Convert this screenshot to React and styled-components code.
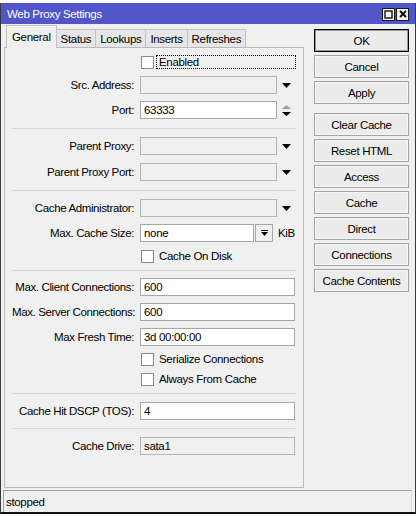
import React from "react";
import styled, { createGlobalStyle } from "styled-components";

const Global = createGlobalStyle`
  html, body { margin: 0; padding: 0; background: #ffffff; }
  body {
    font-family: "Liberation Sans", Arial, sans-serif;
    font-size: 11.5px;
    letter-spacing: -0.33px;
    color: #000;
  }
  #root { width: 416px; height: 516px; overflow: hidden; }
`;

const Page = styled.div`
  width: 416px;
  height: 516px;
  padding-top: 3px;
  box-sizing: border-box;
  background: #fff;
`;

const Window = styled.div`
  width: 416px;
  height: 511px;
  box-sizing: border-box;
  border-left: 1px solid #3a3a3a;
  border-right: 1px solid #3a3a3a;
  border-bottom: 2px solid #111;
  background: #f0f0f0;
  display: flex;
  flex-direction: column;
`;

const TitleBar = styled.div`
  height: 21px;
  flex: none;
  background: #5156c8;
  color: #fff;
  display: flex;
  align-items: center;
  padding: 0 6px 0 6px;
  font-size: 11.5px;
`;

const TitleButtons = styled.div`
  margin-left: auto;
  display: flex;
  gap: 1px;
  margin-top: 1px;
`;

const TitleButton = styled.div`
  width: 13px;
  height: 13px;
  box-sizing: border-box;
  border: 1px solid #1a1a1a;
  background: #f0f0f0;
  display: flex;
  align-items: center;
  justify-content: center;
`;

const Body = styled.div`
  flex: 1;
  display: flex;
  flex-direction: column;
  padding-top: 1px;
`;

const Main = styled.div`
  display: flex;
  align-items: flex-start;
  padding-left: 3px;
`;

const LeftCol = styled.div`
  width: 300px;
  display: flex;
  flex-direction: column;
`;

const TabStrip = styled.div`
  display: flex;
  align-items: flex-end;
  height: 23px;
  padding-left: 2px;
  margin-bottom: -1px;
  position: relative;
  z-index: 1;
`;

const Tab = styled.div`
  height: ${(p) => (p.$active ? "23px" : "19px")};
  box-sizing: border-box;
  padding: 0 ${(p) => (p.$active ? "5px" : "4px")};
  border: 1px solid #c2c2c2;
  border-bottom: ${(p) => (p.$active ? "none" : "1px solid #b9b9b9")};
  background: ${(p) => (p.$active ? "#f0f0f0" : "#e6e6e6")};
  display: flex;
  align-items: center;
  padding-top: ${(p) => (p.$active ? "0" : "1px")};
  & + & { margin-left: -1px; }
`;

const Panel = styled.div`
  height: 441px;
  box-sizing: border-box;
  border: 1px solid #b9b9b9;
  background: #f0f0f0;
  padding: 7px 7px 0 7px;
  display: flex;
  flex-direction: column;
`;

const Section = styled.div`
  display: flex;
  flex-direction: column;
  gap: ${(p) => p.$gap}px;
  margin-top: ${(p) => p.$mt || 0}px;
`;

const Separator = styled.div`
  border-top: 1px solid #d6d6d6;
  margin: ${(p) => p.$top}px 0 ${(p) => p.$bottom}px 0;
`;

const Row = styled.div`
  display: flex;
  align-items: center;
  height: 18px;
`;

const Label = styled.div`
  width: 122px;
  flex: none;
  text-align: right;
  margin-right: 6px;
  white-space: nowrap;
  letter-spacing: -0.38px;
`;

const Field = styled.div`
  width: ${(p) => p.$w}px;
  height: 18px;
  flex: none;
  box-sizing: border-box;
  border: 1px solid ${(p) => (p.$disabled ? "#b4b4b4" : "#a7a7a7")};
  background: ${(p) => (p.$disabled ? "#f0f0f0" : "#ffffff")};
  padding: 0 3px;
  display: flex;
  align-items: center;
  white-space: nowrap;
`;

const ArrowSlot = styled.div`
  width: 18px;
  height: 18px;
  flex: none;
  display: flex;
  align-items: center;
  justify-content: center;
`;

const SmallButton = styled.div`
  width: 18px;
  height: 18px;
  margin-left: 1px;
  flex: none;
  box-sizing: border-box;
  border: 1px solid #a7a7a7;
  background: #f0f0f0;
  display: flex;
  align-items: center;
  justify-content: center;
`;

const Unit = styled.span`
  margin-left: 5px;
`;

const CheckRow = styled.div`
  display: flex;
  align-items: center;
  height: 14px;
  padding-left: 129px;
`;

const CheckBox = styled.div`
  width: 13px;
  height: 13px;
  flex: none;
  box-sizing: border-box;
  border: 1px solid #8a8a8a;
  background: #fff;
`;

const CheckText = styled.div`
  flex: 1;
  height: 14px;
  box-sizing: border-box;
  margin-left: 2px;
  padding-left: 2px;
  border: 1px ${(p) => (p.$focused ? "dotted #000" : "solid transparent")};
  display: flex;
  align-items: center;
  white-space: nowrap;
`;

const RightCol = styled.div`
  margin-left: 10px;
  padding-top: 4px;
  display: flex;
  flex-direction: column;
  gap: 3px;
`;

const Button = styled.div`
  width: 95px;
  height: 23px;
  box-sizing: border-box;
  border: 1px solid ${(p) => (p.$default ? "#000" : "#a3a3a3")};
  box-shadow: inset 0 0 0 1px ${(p) => (p.$default ? "#9a9a9a" : "#f6f6f6")};
  background: #ececec;
  display: flex;
  align-items: center;
  justify-content: center;
  margin-top: ${(p) => p.$mt || 0}px;
  white-space: nowrap;
`;

const StatusBar = styled.div`
  height: 22px;
  margin: 2px 3px 0 2px;
  box-sizing: border-box;
  border-top: 1px solid #a0a0a0;
  border-left: 1px solid #a0a0a0;
  border-right: 1px solid #dadada;
  padding-left: 2px;
  display: flex;
  align-items: center;
`;

const DropArrow = () => (
  <svg width="9" height="5" viewBox="0 0 9 5">
    <polygon points="0,0 9,0 4.5,5" fill="#000" />
  </svg>
);

const SpinArrows = () => (
  <svg width="9" height="11" viewBox="0 0 9 11">
    <polygon points="0,4 9,4 4.5,0" fill="#a0a0a0" />
    <polygon points="0,7 9,7 4.5,11" fill="#000" />
  </svg>
);

const BarArrow = () => (
  <svg width="7" height="7" viewBox="0 0 7 7">
    <rect x="0" y="0" width="7" height="1" fill="#000" />
    <polygon points="0,2 7,2 3.5,6" fill="#000" />
  </svg>
);

const MaxIcon = () => (
  <svg width="9" height="9" viewBox="0 0 9 9">
    <rect x="1" y="1" width="7" height="7" fill="none" stroke="#000" strokeWidth="1.3" />
  </svg>
);

const CloseIcon = () => (
  <svg width="8" height="8" viewBox="0 0 8 8">
    <path d="M1 1 L7 7 M7 1 L1 7" stroke="#000" strokeWidth="1.8" />
  </svg>
);

const TextRow = ({ label, value, disabled }) => (
  <Row>
    <Label>{label}</Label>
    <Field $w={155} $disabled={disabled}>{value}</Field>
  </Row>
);

const ComboRow = ({ label, value }) => (
  <Row>
    <Label>{label}</Label>
    <Field $w={137} $disabled>{value}</Field>
    <ArrowSlot><DropArrow /></ArrowSlot>
  </Row>
);

const Check = ({ text, focused }) => (
  <CheckRow>
    <CheckBox />
    <CheckText $focused={focused}>{text}</CheckText>
  </CheckRow>
);

const tabs = ["General", "Status", "Lookups", "Inserts", "Refreshes"];
const buttons = [
  { t: "OK", d: true },
  { t: "Cancel" },
  { t: "Apply" },
  { t: "Clear Cache", mt: 6 },
  { t: "Reset HTML" },
  { t: "Access" },
  { t: "Cache" },
  { t: "Direct" },
  { t: "Connections" },
  { t: "Cache Contents" },
];

export default function App() {
  return (
    <Page>
      <Global />
      <Window>
        <TitleBar>
          <span>Web Proxy Settings</span>
          <TitleButtons>
            <TitleButton><MaxIcon /></TitleButton>
            <TitleButton><CloseIcon /></TitleButton>
          </TitleButtons>
        </TitleBar>
        <Body>
          <Main>
            <LeftCol>
              <TabStrip>
                {tabs.map((t, i) => (
                  <Tab key={t} $active={i === 0}>{t}</Tab>
                ))}
              </TabStrip>
              <Panel>
                <Section $gap={7}>
                  <Check text="Enabled" focused />
                  <ComboRow label="Src. Address:" />
                  <Row>
                    <Label>Port:</Label>
                    <Field $w={137}>63333</Field>
                    <ArrowSlot><SpinArrows /></ArrowSlot>
                  </Row>
                </Section>
                <Separator $top={9} $bottom={8} />
                <Section $gap={8}>
                  <ComboRow label="Parent Proxy:" />
                  <ComboRow label="Parent Proxy Port:" />
                </Section>
                <Separator $top={9} $bottom={8} />
                <Section $gap={7}>
                  <ComboRow label="Cache Administrator:" />
                  <Row>
                    <Label>Max. Cache Size:</Label>
                    <Field $w={114}>none</Field>
                    <SmallButton><BarArrow /></SmallButton>
                    <Unit>KiB</Unit>
                  </Row>
                  <Check text="Cache On Disk" />
                </Section>
                <Separator $top={7} $bottom={7} />
                <Section $gap={7}>
                  <TextRow label="Max. Client Connections:" value="600" />
                  <TextRow label="Max. Server Connections:" value="600" />
                  <TextRow label="Max Fresh Time:" value="3d 00:00:00" />
                </Section>
                <Section $gap={6} $mt={6}>
                  <Check text="Serialize Connections" />
                  <Check text="Always From Cache" />
                </Section>
                <Separator $top={7} $bottom={8} />
                <TextRow label="Cache Hit DSCP (TOS):" value="4" />
                <Separator $top={8} $bottom={8} />
                <TextRow label="Cache Drive:" value="sata1" disabled />
              </Panel>
            </LeftCol>
            <RightCol>
              {buttons.map((b) => (
                <Button key={b.t} $default={b.d} $mt={b.mt}>{b.t}</Button>
              ))}
            </RightCol>
          </Main>
          <StatusBar>stopped</StatusBar>
        </Body>
      </Window>
    </Page>
  );
}
